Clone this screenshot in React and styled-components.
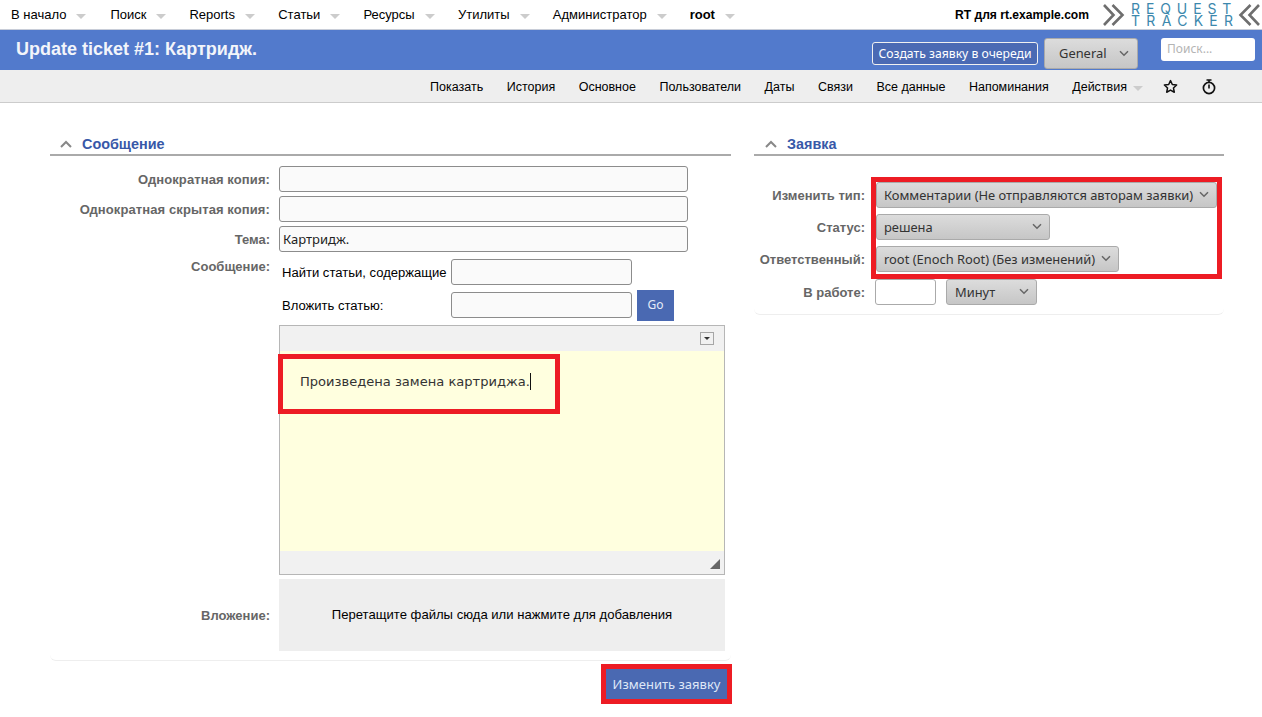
import React from 'react';
import styled, {createGlobalStyle} from 'styled-components';

const Global = createGlobalStyle`
    html, body {
        margin: 0;
        padding: 0;
        background: #fff;
        font-family: "Liberation Sans", Arial, sans-serif;
        font-size: 13px;
        color: #000;
    }
`;

const Page = styled.div`
    width: 1262px;
    height: 717px;
    overflow: hidden;
`;

const TopBar = styled.div`
    height: 29px;
    display: flex;
    align-items: center;
    border-bottom: 1px solid #c8cdd8;
`;
const TopMenu = styled.div`
    display: flex;
    flex: 1;
    padding-left: 11px;
`;
const TopItem = styled.div`
    display: flex;
    align-items: center;
    margin-right: ${p => p.$gap}px;
    font-weight: ${p => p.$bold ? 'bold' : 'normal'};
`;
const Caret = styled.span`
    display: inline-block;
    width: 0;
    height: 0;
    margin-left: ${p => p.$left || 10}px;
    margin-top: 3px;
    border-left: 5px solid transparent;
    border-right: 5px solid transparent;
    border-top: 5px solid #ccc;
`;
const RtName = styled.div`
    font-size: 12.1px;
    font-weight: bold;
    margin-right: 14px;
`;
const Logo = styled.div`
    display: flex;
    align-items: center;
    width: 159px;
    flex: none;
`;
const LogoText = styled.div`
    width: 102px;
    margin: 0 5px 0 6px;
    flex: none;
    color: #3c88ad;
    font-family: Inter, sans-serif;
    font-size: 14px;
    line-height: 12px;
`;
const LogoLine = styled.div`
    letter-spacing: ${p => p.$spacing}px;
    white-space: nowrap;
`;

const TitleBar = styled.div`
    height: 40px;
    background: #527acc;
    display: flex;
    align-items: center;
`;
const Title = styled.h1`
    flex: 1;
    margin: 0 0 1px 16px;
    color: #f3f5fa;
    font-size: 18px;
    font-weight: bold;
`;
const CreateButton = styled.div`
    box-sizing: border-box;
    width: 166px;
    height: 23px;
    line-height: 21px;
    align-self: flex-start;
    margin: 12px 6px 0 0;
    text-align: center;
    color: #fff;
    background: #4a6ab4;
    border: 1px solid #f0f0f0;
    border-radius: 3px;
    font-family: "Noto Sans", sans-serif;
    font-size: 12.2px;
`;
const Search = styled.div`
    box-sizing: border-box;
    width: 94px;
    height: 23px;
    line-height: 22px;
    margin: 8px 7px 0 23px;
    align-self: flex-start;
    padding-left: 6px;
    background: #fff;
    border-radius: 3px;
    color: #b4b4b4;
    font-family: "Noto Sans", sans-serif;
    font-size: 12px;
`;

const SubNav = styled.div`
    height: 33px;
    box-sizing: border-box;
    background: #eee;
    border-bottom: 1px solid #ccc;
    display: flex;
    align-items: center;
    justify-content: flex-end;
    padding: 2px 46px 1px 0;
`;
const SubItem = styled.div`
    font-size: 12.5px;
    margin-left: 23.5px;
    display: flex;
    align-items: center;
`;
const IconSlot = styled.span`
    display: flex;
    margin-left: ${p => p.$left}px;
`;

const Columns = styled.div`
    display: flex;
    padding: 31px 0 0 50px;
`;
const Panel = styled.section`
    width: ${p => p.$width}px;
    margin-right: 23px;
    flex: none;
`;
const PanelHead = styled.div`
    height: 20px;
    border-bottom: 2px solid #aaa;
    display: flex;
    align-items: center;
    color: #3858a8;
    font-size: 14.4px;
    font-weight: bold;
    padding-left: ${p => p.$left}px;
    svg { margin-right: 10px; }
`;
const PanelBody = styled.div`
    border-bottom: 1px solid #eee;
    border-radius: 0 0 6px 6px;
    padding: ${p => p.$pad};
`;

const Row = styled.div`
    display: flex;
    align-items: ${p => p.$align || 'center'};
    height: ${p => p.$height}px;
`;
const Label = styled.div`
    width: ${p => p.$width}px;
    flex: none;
    text-align: right;
    color: #666;
    font-size: 13px;
    font-weight: bold;
    margin-right: 9px;
    padding-top: ${p => p.$top || 0}px;
    letter-spacing: ${p => p.$spacing || 0}px;
`;
const TextInput = styled.div`
    box-sizing: border-box;
    width: ${p => p.$width}px;
    height: 26px;
    line-height: 24px;
    padding-left: 3px;
    background: #fafafa;
    border: 1px solid #8c8c8c;
    border-radius: 3px;
    font-family: "Noto Sans", sans-serif;
    font-size: 13px;
    color: #222;
`;
const ArticleRow = styled.div`
    display: flex;
    align-items: center;
    height: ${p => p.$height}px;
    padding-left: 3px;
`;
const ArticleLabel = styled.div`
    width: 169px;
    flex: none;
    font-size: 13.05px;
`;
const GoButton = styled.div`
    width: 37px;
    height: 31px;
    margin-left: 5px;
    background: #4a69b2;
    color: #e6ecf8;
    font-family: "Noto Sans", sans-serif;
    font-size: 12px;
    line-height: 30px;
    text-align: center;
`;

const Editor = styled.div`
    box-sizing: border-box;
    width: 446px;
    height: 250px;
    margin-top: 3px;
    border: 1px solid #b6b6b6;
    background: #f1f1f1;
    position: relative;
`;
const EditorTop = styled.div`
    height: 25px;
    display: flex;
    justify-content: flex-end;
    align-items: center;
    padding-right: 10px;
`;
const ToolButton = styled.div`
    box-sizing: border-box;
    width: 14px;
    height: 13px;
    border: 1px solid #a6a6a6;
    display: flex;
    align-items: center;
    justify-content: center;
    &::after {
        content: '';
        border-left: 3px solid transparent;
        border-right: 3px solid transparent;
        border-top: 3px solid #333;
    }
`;
const EditorArea = styled.div`
    height: 200px;
    background: #ffffdf;
    box-sizing: border-box;
    padding: 22px 20px;
    font-family: "DejaVu Sans", sans-serif;
    font-size: 13.05px;
    line-height: 18px;
    color: #333;
`;
const Cursor = styled.span`
    display: inline-block;
    width: 1px;
    height: 17px;
    background: #111;
    vertical-align: -4px;
`;
const Resize = styled.div`
    position: absolute;
    right: 4px;
    bottom: 5px;
    width: 0;
    height: 0;
    border-left: 10px solid transparent;
    border-bottom: 10px solid #666;
`;
const DropZone = styled.div`
    box-sizing: border-box;
    width: 446px;
    height: 72px;
    margin-top: 4px;
    padding-bottom: 2px;
    background: #eee;
    display: flex;
    align-items: center;
    justify-content: center;
    font-size: 13.1px;
`;
const Actions = styled.div`
    display: flex;
    justify-content: flex-end;
    padding: 8px 4px 0 0;
`;
const Submit = styled.div`
    width: 121px;
    height: 30px;
    background: #4a69b2;
    color: #dfe7f7;
    font-family: "Noto Sans", sans-serif;
    font-size: 13px;
    line-height: 30px;
    text-align: center;
    position: relative;
`;

// красные рамки поверх контента
const Highlight = styled.div`
    position: absolute;
    top: ${p => p.$t}px;
    left: ${p => p.$l}px;
    right: ${p => p.$r}px;
    bottom: ${p => p.$b}px;
    border: 5px solid #ed1c24;
    pointer-events: none;
`;
const HighlightWrap = styled.div`
    position: relative;
`;

const Select = styled.div`
    box-sizing: border-box;
    width: ${p => p.$width}px;
    height: 26px;
    line-height: 24px;
    padding-left: ${p => p.$pad || 7}px;
    position: relative;
    background: linear-gradient(#dcdcdc, #c6c6c6);
    border: 1px solid #aaa;
    border-radius: 3px;
    font-family: "Noto Sans", sans-serif;
    font-size: 12.9px;
    color: #333;
    white-space: nowrap;
    svg { position: absolute; right: 7px; top: 8px; }
`;
const GeneralSelect = styled(Select)`
    height: 31px;
    line-height: 29px;
    padding-left: 14px;
    align-self: flex-start;
    margin-top: 8px;
    svg { top: 11px; right: 8px; }
`;
const RightRow = styled.div`
    display: flex;
    align-items: center;
    height: ${p => p.$height || 32}px;
`;
const RightLabel = styled.div`
    width: 111px;
    flex: none;
    margin-right: 11px;
    text-align: right;
    color: #666;
    font-weight: bold;
    font-size: 13px;
`;
const TimeInput = styled.div`
    box-sizing: border-box;
    width: 61px;
    height: 26px;
    margin: 0 10px 0 -1px;
    background: #fff;
    border: 1px solid #aaa;
    border-radius: 3px;
`;

const Chevron = ({up}) => up
    ? <svg width="12" height="8" viewBox="0 0 12 8" fill="none">
        <path d="M1 7 L6 2 L11 7" stroke="#888" strokeWidth="2"/>
    </svg>
    : <svg width="10" height="7" viewBox="0 0 10 7" fill="none">
        <path d="M1 1.2 L5 5.2 L9 1.2" stroke="#666" strokeWidth="1.5"/>
    </svg>;

const LogoArrows = ({flip}) => <svg width="22" height="22" viewBox="0 0 22 22" fill="none"
    style={flip ? {transform: 'scaleX(-1)'} : undefined}>
    <path d="M1 1 L10.5 11 L1 21 M9.5 1 L19.5 11 L9.5 21" stroke="#6e6e6e" strokeWidth="2.6"/>
</svg>;

const Star = () => <svg width="15" height="15" viewBox="0 0 24 24" fill="none" stroke="#111" strokeWidth="2.4" strokeLinejoin="round">
    <path d="M12 2.5 L14.9 8.8 L21.8 9.6 L16.7 14.3 L18.1 21.2 L12 17.7 L5.9 21.2 L7.3 14.3 L2.2 9.6 L9.1 8.8 Z"/>
</svg>;

const Stopwatch = () => <svg width="14" height="16" viewBox="0 0 14 16" fill="none" stroke="#111">
    <circle cx="7" cy="9" r="5.6" strokeWidth="1.7"/>
    <path d="M4.5 1 H9.5 M7 1 V3 M7 5.5 V9.5" strokeWidth="1.6"/>
</svg>;

const topItems = [
    {name: 'В начало', gap: 24},
    {name: 'Поиск', gap: 23},
    {name: 'Reports', gap: 23.3},
    {name: 'Статьи', gap: 23},
    {name: 'Ресурсы', gap: 23.3},
    {name: 'Утилиты', gap: 23.3},
    {name: 'Администратор', gap: 23},
    {name: 'root', gap: 0, bold: true},
];
const subItems = ['Показать', 'История', 'Основное', 'Пользователи', 'Даты', 'Связи', 'Все данные', 'Напоминания'];

const App = () => (
    <Page>
        <Global/>
        <TopBar>
            <TopMenu>
                {topItems.map(item => <TopItem key={item.name} $gap={item.gap} $bold={item.bold}>
                    {item.name}<Caret/>
                </TopItem>)}
            </TopMenu>
            <RtName>RT для rt.example.com</RtName>
            <Logo>
                <LogoArrows/>
                <LogoText>
                    <LogoLine $spacing={5.9}>REQUEST</LogoLine>
                    <LogoLine $spacing={6.3}>TRACKER</LogoLine>
                </LogoText>
                <LogoArrows flip/>
            </Logo>
        </TopBar>
        <TitleBar>
            <Title>Update ticket #1: Картридж.</Title>
            <CreateButton>Создать заявку в очереди</CreateButton>
            <GeneralSelect $width={94}>General<Chevron/></GeneralSelect>
            <Search>Поиск...</Search>
        </TitleBar>
        <SubNav>
            {subItems.map(name => <SubItem key={name}>{name}</SubItem>)}
            <SubItem>Действия<Caret $left={6}/></SubItem>
            <IconSlot $left={20}><Star/></IconSlot>
            <IconSlot $left={24}><Stopwatch/></IconSlot>
        </SubNav>
        <Columns>
            <Panel $width={681}>
                <PanelHead $left={10}><Chevron up/>Сообщение</PanelHead>
                <PanelBody $pad="10px 0 9px 0">
                    <Row $height={30} $align="flex-start">
                        <Label $width={220} $top={6} $spacing={0.1}>Однократная копия:</Label>
                        <TextInput $width={409}/>
                    </Row>
                    <Row $height={30} $align="flex-start">
                        <Label $width={220} $top={6} $spacing={0.1}>Однократная скрытая копия:</Label>
                        <TextInput $width={409}/>
                    </Row>
                    <Row $height={30} $align="flex-start">
                        <Label $width={220} $top={6}>Тема:</Label>
                        <TextInput $width={409}>Картридж.</TextInput>
                    </Row>
                    <Row $align="flex-start">
                        <Label $width={220} $top={3}>Сообщение:</Label>
                        <div>
                            <ArticleRow $height={32}>
                                <ArticleLabel>Найти статьи, содержащие</ArticleLabel>
                                <TextInput $width={181}/>
                            </ArticleRow>
                            <ArticleRow $height={34}>
                                <ArticleLabel>Вложить статью:</ArticleLabel>
                                <TextInput $width={181}/>
                                <GoButton>Go</GoButton>
                            </ArticleRow>
                            <Editor>
                                <EditorTop><ToolButton/></EditorTop>
                                <EditorArea>Произведена замена картриджа.<Cursor/></EditorArea>
                                <Resize/>
                                <Highlight $t={28} $l={-2} $r={164} $b={160}/>
                            </Editor>
                        </div>
                    </Row>
                    <Row $align="center">
                        <Label $width={220} $top={4}>Вложение:</Label>
                        <DropZone>Перетащите файлы сюда или нажмите для добавления</DropZone>
                    </Row>
                </PanelBody>
                <Actions>
                    <Submit>Изменить заявку<Highlight $t={-5} $l={-5} $r={-5} $b={-5}/></Submit>
                </Actions>
            </Panel>
            <Panel $width={470}>
                <PanelHead $left={11}><Chevron up/>Заявка</PanelHead>
                <PanelBody $pad="23px 0 5px 0">
                    <HighlightWrap>
                        <RightRow>
                            <RightLabel>Изменить тип:</RightLabel>
                            <Select $width={341}>Комментарии (Не отправляются авторам заявки)<Chevron/></Select>
                        </RightRow>
                        <RightRow>
                            <RightLabel>Статус:</RightLabel>
                            <Select $width={174}>решена<Chevron/></Select>
                        </RightRow>
                        <RightRow>
                            <RightLabel>Ответственный:</RightLabel>
                            <Select $width={243}>root (Enoch Root) (Без изменений)<Chevron/></Select>
                        </RightRow>
                        <Highlight $t={-2} $l={117} $r={2} $b={-4}/>
                    </HighlightWrap>
                    <RightRow $height={34}>
                        <RightLabel>В работе:</RightLabel>
                        <TimeInput/>
                        <Select $width={91} $pad={8}>Минут<Chevron/></Select>
                    </RightRow>
                </PanelBody>
            </Panel>
        </Columns>
    </Page>
);

export default App;
